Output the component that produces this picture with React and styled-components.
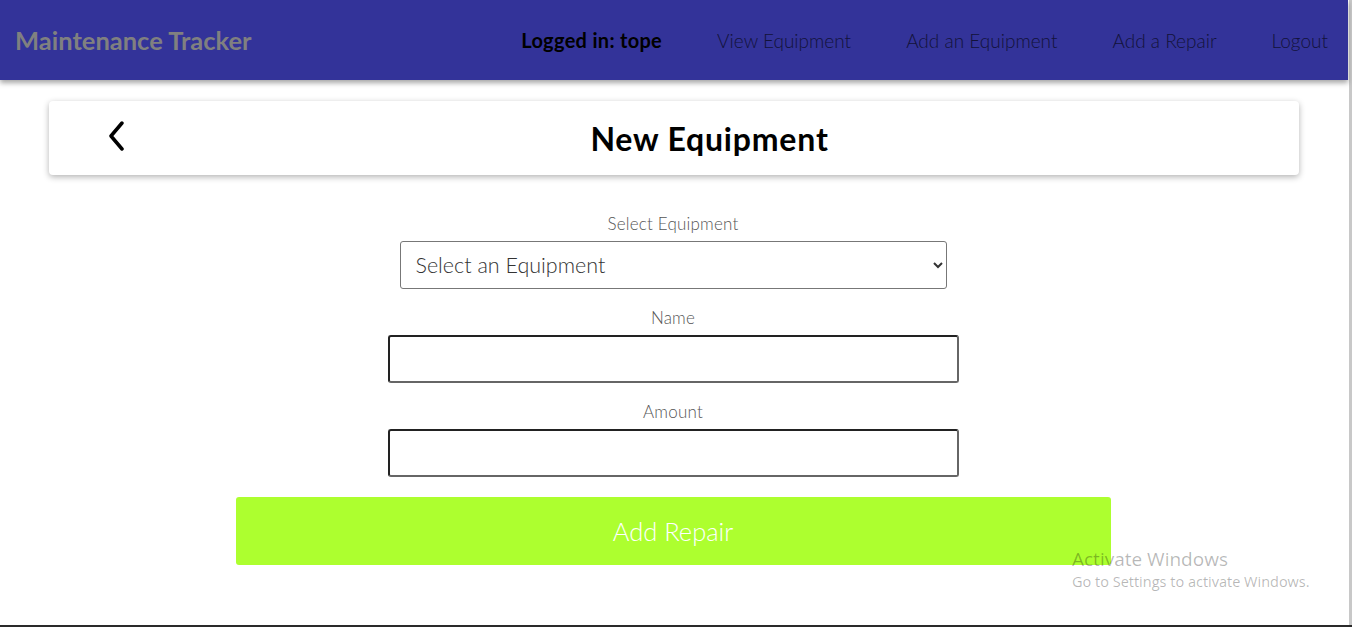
import React from "react";
import styled, { createGlobalStyle } from "styled-components";

const Global = createGlobalStyle`
  html, body { margin: 0; padding: 0; background: #fff; }
  body { font-family: "Lato", "Open Sans", sans-serif; overflow: hidden; }
  * { box-sizing: border-box; }
`;

const Screen = styled.div`
  display: flex;
  flex-direction: column;
  height: 627px;
  width: 1352px;
`;

const Body = styled.div`
  flex: 1;
  display: flex;
  min-height: 0;
`;

const Page = styled.div`
  flex: 1;
  display: flex;
  flex-direction: column;
  position: relative;
`;

const Scrollbar = styled.div`
  width: 4px;
  background: #fff;
  border-right: 3px solid #c8c8c8;
`;

const Taskbar = styled.div`
  height: 2px;
  background: #2a2a2a;
`;

const Header = styled.header`
  height: 80px;
  background: #333399;
  display: flex;
  align-items: center;
  justify-content: space-between;
  padding: 0 20px 0 15px;
  box-shadow: 0 3px 5px rgba(0, 0, 0, 0.35);
  position: relative;
  z-index: 1;
`;

const Brand = styled.div`
  color: #808080;
  font-weight: 700;
  font-size: 25.5px;
`;

const Nav = styled.nav`
  display: flex;
  align-items: center;
  gap: 55px;
`;

const NavItem = styled.span`
  font-size: ${(p) => (p.$bold ? 20 : 19)}px;
  letter-spacing: ${(p) => (p.$bold ? 0.3 : 0)}px;
  font-weight: ${(p) => (p.$bold ? 700 : 300)};
  color: ${(p) => (p.$bold ? "#000" : "#12123a")};
`;

const CardWrap = styled.div`
  padding: 21px 49px 0 49px;
`;

const Card = styled.div`
  height: 74px;
  background: #fff;
  border-radius: 4px;
  box-shadow: 0 2px 6px rgba(0, 0, 0, 0.3);
  display: grid;
  grid-template-columns: 78px 1fr;
  align-items: center;
`;

const Back = styled.div`
  display: flex;
  justify-content: flex-end;
  margin-top: -4px;
`;

const Title = styled.h1`
  margin: 0;
  padding-right: 7px;
  text-align: center;
  font-size: 32px;
  letter-spacing: 0.8px;
  font-weight: 700;
  color: #000;
`;

const Form = styled.form`
  display: flex;
  flex-direction: column;
  align-items: center;
  padding-top: 39px;
  padding-right: 2px;
`;

const Label = styled.label`
  display: block;
  font-size: 17px;
  line-height: 20px;
  letter-spacing: 0.2px;
  font-weight: 300;
  color: #555;
  margin-top: ${(p) => p.$mt || 0}px;
  margin-bottom: 7px;
`;

const Select = styled.select`
  width: 547px;
  height: 48px;
  border: 1px solid #777;
  border-radius: 3px;
  background: #fff;
  font-family: "Lato", sans-serif;
  font-weight: 300;
  font-size: 21.5px;
  color: #333;
  padding: 0 10px 0 11px;
  appearance: auto;
`;

const Input = styled.input`
  width: 571px;
  height: 48px;
  border: 2px solid #222;
  border-right-color: #666;
  border-bottom-color: #666;
  border-radius: 3px;
  background: #fff;
  font-size: 18px;
  padding: 0 10px;
`;

const Button = styled.button`
  margin-top: 20px;
  width: 875px;
  height: 68px;
  border: none;
  border-radius: 3px;
  background: #adff2f;
  color: #fff;
  font-family: "Lato", sans-serif;
  font-weight: 300;
  font-size: 25.5px;
`;

const Watermark = styled.div`
  position: absolute;
  left: 1072px;
  top: 550px;
  font-family: "Open Sans", "Noto Sans", sans-serif;
  color: rgba(0, 0, 0, 0.28);
  line-height: 1;
`;

const WmTitle = styled.div`
  font-size: 19px;
`;

const WmSub = styled.div`
  font-size: 14.5px;
  margin-top: 6px;
`;

export default function App() {
  return (
    <Screen>
      <Global />
      <Body>
        <Page>
          <Header>
            <Brand>Maintenance Tracker</Brand>
            <Nav>
              <NavItem $bold>Logged in: tope</NavItem>
              <NavItem>View Equipment</NavItem>
              <NavItem>Add an Equipment</NavItem>
              <NavItem>Add a Repair</NavItem>
              <NavItem>Logout</NavItem>
            </Nav>
          </Header>
          <CardWrap>
            <Card>
              <Back>
                <svg width="20" height="30" viewBox="0 0 20 30">
                  <path d="M15 2 L4 15 L15 28" fill="none" stroke="#000" strokeWidth="3.5" strokeLinecap="round" strokeLinejoin="round" />
                </svg>
              </Back>
              <Title>New Equipment</Title>
            </Card>
          </CardWrap>
          <Form onSubmit={(e) => e.preventDefault()}>
            <Label>Select Equipment</Label>
            <Select defaultValue="">
              <option value="">Select an Equipment</option>
            </Select>
            <Label $mt={19}>Name</Label>
            <Input type="text" />
            <Label $mt={19}>Amount</Label>
            <Input type="text" />
            <Button type="submit">Add Repair</Button>
          </Form>
          <Watermark>
            <WmTitle>Activate Windows</WmTitle>
            <WmSub>Go to Settings to activate Windows.</WmSub>
          </Watermark>
        </Page>
        <Scrollbar />
      </Body>
      <Taskbar />
    </Screen>
  );
}
